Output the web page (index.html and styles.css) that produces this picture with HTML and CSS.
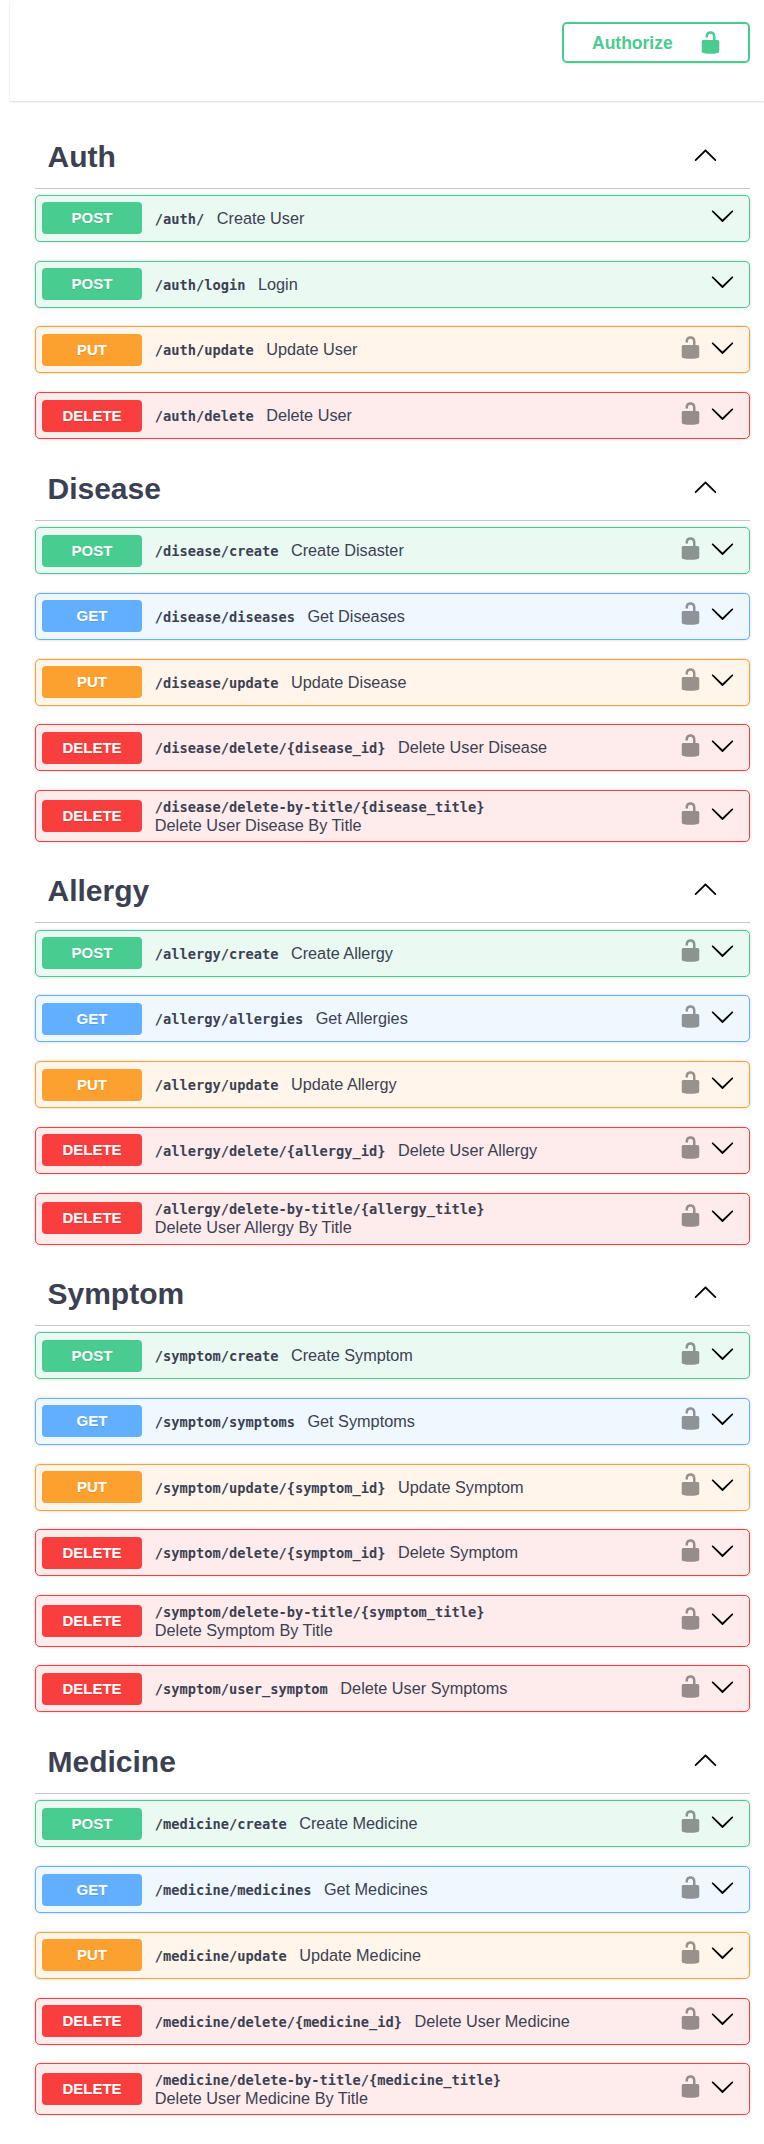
FILE: index.html
```
<!DOCTYPE html>
<html lang="en">
<head>
<meta charset="utf-8">
<title>API documentation</title>
<link rel="stylesheet" href="styles.css">
</head>
<body>
<svg class="sprite" aria-hidden="true">
  <symbol id="unlocked" viewBox="0 0 20 20"><path d="M15.8 8H14V5.6C14 2.703 12.665 1 10 1 7.334 1 6 2.703 6 5.6V6h2v-.801C8 3.754 8.797 3 10 3c1.203 0 2 .754 2 2.199V8H4c-.553 0-1 .646-1 1.199V17c0 .549.428 1.139.951 1.307l1.197.387C5.672 18.861 6.55 19 7.1 19h5.8c.549 0 1.428-.139 1.951-.307l1.196-.387c.524-.167.953-.757.953-1.306V9.199C17 8.646 16.352 8 15.8 8z"/></symbol>
  <symbol id="up" viewBox="0 0 20 20"><path d="M17.418 14.908c.272.268.709.268.979 0s.271-.701 0-.969l-7.908-7.83c-.27-.268-.707-.268-.979 0l-7.908 7.83c-.27.268-.27.701 0 .969.271.268.709.268.979 0L10 7.767l7.418 7.141z"/></symbol>
  <symbol id="down" viewBox="0 0 20 20"><path d="M17.418 6.109c.272-.268.709-.268.979 0s.271.701 0 .969l-7.908 7.83c-.27.268-.707.268-.979 0l-7.908-7.83c-.27-.268-.27-.701 0-.969.271-.268.709-.268.979 0L10 13.25l7.418-7.141z"/></symbol>
</svg>
<header class="scheme">
  <button class="authorize"><span>Authorize</span><svg class="icon"><use href="#unlocked"/></svg></button>
</header>
<main class="wrapper">
  <section>
    <h3 class="tag"><span>Auth</span><svg class="icon"><use href="#up"/></svg></h3>
    <div class="op post"><span class="method">POST</span><div class="info"><code>/auth/</code><span>Create User</span></div><svg class="icon"><use href="#down"/></svg></div>
    <div class="op post snug"><span class="method">POST</span><div class="info"><code>/auth/login</code><span>Login</span></div><svg class="icon"><use href="#down"/></svg></div>
    <div class="op put low"><span class="method">PUT</span><div class="info"><code>/auth/update</code><span>Update User</span></div><svg class="icon lock"><use href="#unlocked"/></svg><svg class="icon"><use href="#down"/></svg></div>
    <div class="op delete low"><span class="method">DELETE</span><div class="info"><code>/auth/delete</code><span>Delete User</span></div><svg class="icon lock"><use href="#unlocked"/></svg><svg class="icon"><use href="#down"/></svg></div>
  </section>
  <section>
    <h3 class="tag"><span>Disease</span><svg class="icon"><use href="#up"/></svg></h3>
    <div class="op post low"><span class="method">POST</span><div class="info"><code>/disease/create</code><span>Create Disaster</span></div><svg class="icon lock"><use href="#unlocked"/></svg><svg class="icon"><use href="#down"/></svg></div>
    <div class="op get"><span class="method">GET</span><div class="info"><code>/disease/diseases</code><span>Get Diseases</span></div><svg class="icon lock"><use href="#unlocked"/></svg><svg class="icon"><use href="#down"/></svg></div>
    <div class="op put snug"><span class="method">PUT</span><div class="info"><code>/disease/update</code><span>Update Disease</span></div><svg class="icon lock"><use href="#unlocked"/></svg><svg class="icon"><use href="#down"/></svg></div>
    <div class="op delete low"><span class="method">DELETE</span><div class="info"><code>/disease/delete/{disease_id}</code><span>Delete User Disease</span></div><svg class="icon lock"><use href="#unlocked"/></svg><svg class="icon"><use href="#down"/></svg></div>
    <div class="op delete tall low"><span class="method">DELETE</span><div class="info"><code>/disease/delete-by-title/{disease_title}</code><span>Delete User Disease By Title</span></div><svg class="icon lock"><use href="#unlocked"/></svg><svg class="icon"><use href="#down"/></svg></div>
  </section>
  <section>
    <h3 class="tag roomy"><span>Allergy</span><svg class="icon"><use href="#up"/></svg></h3>
    <div class="op post snug"><span class="method">POST</span><div class="info"><code>/allergy/create</code><span>Create Allergy</span></div><svg class="icon lock"><use href="#unlocked"/></svg><svg class="icon"><use href="#down"/></svg></div>
    <div class="op get low"><span class="method">GET</span><div class="info"><code>/allergy/allergies</code><span>Get Allergies</span></div><svg class="icon lock"><use href="#unlocked"/></svg><svg class="icon"><use href="#down"/></svg></div>
    <div class="op put low"><span class="method">PUT</span><div class="info"><code>/allergy/update</code><span>Update Allergy</span></div><svg class="icon lock"><use href="#unlocked"/></svg><svg class="icon"><use href="#down"/></svg></div>
    <div class="op delete"><span class="method">DELETE</span><div class="info"><code>/allergy/delete/{allergy_id}</code><span>Delete User Allergy</span></div><svg class="icon lock"><use href="#unlocked"/></svg><svg class="icon"><use href="#down"/></svg></div>
    <div class="op delete tall"><span class="method">DELETE</span><div class="info"><code>/allergy/delete-by-title/{allergy_title}</code><span>Delete User Allergy By Title</span></div><svg class="icon lock"><use href="#unlocked"/></svg><svg class="icon"><use href="#down"/></svg></div>
  </section>
  <section>
    <h3 class="tag"><span>Symptom</span><svg class="icon"><use href="#up"/></svg></h3>
    <div class="op post low"><span class="method">POST</span><div class="info"><code>/symptom/create</code><span>Create Symptom</span></div><svg class="icon lock"><use href="#unlocked"/></svg><svg class="icon"><use href="#down"/></svg></div>
    <div class="op get"><span class="method">GET</span><div class="info"><code>/symptom/symptoms</code><span>Get Symptoms</span></div><svg class="icon lock"><use href="#unlocked"/></svg><svg class="icon"><use href="#down"/></svg></div>
    <div class="op put snug"><span class="method">PUT</span><div class="info"><code>/symptom/update/{symptom_id}</code><span>Update Symptom</span></div><svg class="icon lock"><use href="#unlocked"/></svg><svg class="icon"><use href="#down"/></svg></div>
    <div class="op delete low"><span class="method">DELETE</span><div class="info"><code>/symptom/delete/{symptom_id}</code><span>Delete Symptom</span></div><svg class="icon lock"><use href="#unlocked"/></svg><svg class="icon"><use href="#down"/></svg></div>
    <div class="op delete tall low"><span class="method">DELETE</span><div class="info"><code>/symptom/delete-by-title/{symptom_title}</code><span>Delete Symptom By Title</span></div><svg class="icon lock"><use href="#unlocked"/></svg><svg class="icon"><use href="#down"/></svg></div>
    <div class="op delete low"><span class="method">DELETE</span><div class="info"><code>/symptom/user_symptom</code><span>Delete User Symptoms</span></div><svg class="icon lock"><use href="#unlocked"/></svg><svg class="icon"><use href="#down"/></svg></div>
  </section>
  <section>
    <h3 class="tag"><span>Medicine</span><svg class="icon"><use href="#up"/></svg></h3>
    <div class="op post low"><span class="method">POST</span><div class="info"><code>/medicine/create</code><span>Create Medicine</span></div><svg class="icon lock"><use href="#unlocked"/></svg><svg class="icon"><use href="#down"/></svg></div>
    <div class="op get low"><span class="method">GET</span><div class="info"><code>/medicine/medicines</code><span>Get Medicines</span></div><svg class="icon lock"><use href="#unlocked"/></svg><svg class="icon"><use href="#down"/></svg></div>
    <div class="op put"><span class="method">PUT</span><div class="info"><code>/medicine/update</code><span>Update Medicine</span></div><svg class="icon lock"><use href="#unlocked"/></svg><svg class="icon"><use href="#down"/></svg></div>
    <div class="op delete snug"><span class="method">DELETE</span><div class="info"><code>/medicine/delete/{medicine_id}</code><span>Delete User Medicine</span></div><svg class="icon lock"><use href="#unlocked"/></svg><svg class="icon"><use href="#down"/></svg></div>
    <div class="op delete tall low"><span class="method">DELETE</span><div class="info"><code>/medicine/delete-by-title/{medicine_title}</code><span>Delete User Medicine By Title</span></div><svg class="icon lock"><use href="#unlocked"/></svg><svg class="icon"><use href="#down"/></svg></div>
  </section>
</main>
</body>
</html>
```
FILE: styles.css
```
* { box-sizing: border-box; }
body {
  margin: 0;
  background: #fff;
  color: #3b4151;
  font-family: "Liberation Sans", Arial, sans-serif;
}
.sprite { display: none; }
.icon { display: block; flex: none; width: 25px; height: 25px; fill: #000; }

.scheme {
  display: flex;
  justify-content: flex-end;
  align-items: flex-start;
  height: 101px;
  margin-left: 10px;
  padding: 22px 14px 0 0;
  box-shadow: 0 1px 2px rgba(0, 0, 0, .15);
}
.authorize {
  display: flex;
  align-items: center;
  justify-content: space-between;
  width: 188px;
  height: 41px;
  padding: 0 25px 0 28px;
  border: 2px solid #49cc90;
  border-radius: 5px;
  background: transparent;
  box-shadow: 0 1px 2px rgba(0, 0, 0, .1);
  color: #49cc90;
  font: bold 17.5px/20px "Liberation Sans", Arial, sans-serif;
}
.authorize span { padding-top: 1px; }
.authorize .icon { fill: #49cc90; }

.wrapper { padding: 25px 14px 0 35px; }
.tag {
  display: flex;
  align-items: center;
  justify-content: space-between;
  height: 63px;
  margin: 0 0 6px;
  padding: 0 32px 0 12.5px;
  border-bottom: 1px solid rgba(59, 65, 81, .3);
  font-size: 30px;
  line-height: 34px;
}
.tag .icon { margin-bottom: 6px; }
.roomy { margin-bottom: 7px; }

.op {
  display: flex;
  align-items: center;
  height: 47px;
  margin-bottom: 19px;
  padding: 0 14px 1px 6px;
  border: 1px solid;
  border-radius: 5px;
  box-shadow: 0 0 3px rgba(0, 0, 0, .19);
}
.op .icon { margin: 0 0 5.5px; }
.op .lock { margin-right: 7px; opacity: .4; }
.snug { margin-bottom: 18px; }
.low { padding-top: 1px; padding-bottom: 0; }
.method {
  flex: none;
  width: 100px;
  height: 32px;
  border-radius: 4px;
  color: #fff;
  font-size: 15px;
  font-weight: 700;
  line-height: 32px;
  text-align: center;
  text-shadow: 0 1px 0 rgba(0, 0, 0, .1);
}
.info {
  display: flex;
  flex: 1;
  align-items: baseline;
  gap: 12.5px;
  padding-left: 12.8px;
  font-size: 16.25px;
  line-height: 18px;
  white-space: nowrap;
}
.info code { font: bold 13.7px/18px "DejaVu Sans Mono", monospace; }
.low .info { margin-bottom: 2px; }
.tall { height: 52px; margin-bottom: 18px; padding-bottom: 2px; }
.tall.low { padding-top: 0; padding-bottom: 0; }
.tall .info { flex-direction: column; gap: 0; margin-bottom: 0; }

.post { border-color: #49cc90; background: #eaf9f2; }
.post .method { background: #49cc90; }
.get { border-color: #61affe; background: #eff7ff; }
.get .method { background: #61affe; }
.put { border-color: #fca130; background: #fff5ea; }
.put .method { background: #fca130; }
.delete { border-color: #f93e3e; background: #feebeb; }
.delete .method { background: #f93e3e; }
```
